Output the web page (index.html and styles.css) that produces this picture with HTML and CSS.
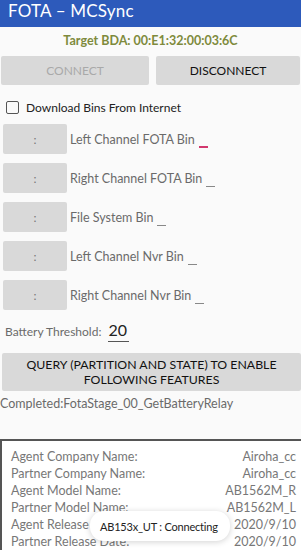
FILE: index.html
```html
<!DOCTYPE html>
<html>
<head>
<meta charset="utf-8">
<link rel="stylesheet" href="styles.css">
</head>
<body>
<div class="app">
  <header class="bar"><span class="title">FOTA – MCSync</span></header>
  <div class="bda">Target BDA: 00:E1:32:00:03:6C</div>
  <div class="conn">
    <div class="btn disabled">CONNECT</div>
    <div class="btn">DISCONNECT</div>
  </div>
  <label class="check"><span class="box"></span>Download Bins From Internet</label>
  <div class="bins">
    <div class="bin"><div class="pick">:</div><span class="name">Left Channel FOTA Bin</span><span class="line red"></span></div>
    <div class="bin"><div class="pick">:</div><span class="name">Right Channel FOTA Bin</span><span class="line"></span></div>
    <div class="bin"><div class="pick">:</div><span class="name">File System Bin</span><span class="line"></span></div>
    <div class="bin"><div class="pick">:</div><span class="name">Left Channel Nvr Bin</span><span class="line"></span></div>
    <div class="bin"><div class="pick">:</div><span class="name">Right Channel Nvr Bin</span><span class="line"></span></div>
  </div>
  <div class="battery"><span class="blabel">Battery Threshold:</span><span class="bval">20</span></div>
  <div class="query">QUERY (PARTITION AND STATE) TO ENABLE FOLLOWING FEATURES</div>
  <div class="status">Completed:FotaStage_00_GetBatteryRelay</div>
  <div class="info">
    <div class="row"><span>Agent Company Name:</span><span>Airoha_cc</span></div>
    <div class="row"><span>Partner Company Name:</span><span>Airoha_cc</span></div>
    <div class="row"><span>Agent Model Name:</span><span>AB1562M_R</span></div>
    <div class="row"><span>Partner Model Name:</span><span>AB1562M_L</span></div>
    <div class="row"><span>Agent Release Date:</span><span>2020/9/10</span></div>
    <div class="row"><span>Partner Release Date:</span><span>2020/9/10</span></div>
    <div class="toast">AB153x_UT : Connecting</div>
  </div>
</div>
</body>
</html>
```
FILE: styles.css
```css
html, body { margin: 0; padding: 0; }
body {
  width: 301px;
  height: 550px;
  overflow: hidden;
  background: #fafafa;
  font-family: Lato, "Noto Sans", sans-serif;
}
.app { display: flex; flex-direction: column; }
.bar {
  height: 27px;
  background: #2d5abb;
  display: flex;
  align-items: flex-end;
  padding-left: 8px;
}
.title {
  color: #fff;
  font-size: 17px;
  line-height: 20px;
  margin-bottom: 6px;
  letter-spacing: 0.2px;
}
.bda {
  text-align: center;
  color: #7e8a3c;
  font-weight: bold;
  font-size: 12.5px;
  margin-top: 6px;
  height: 16px;
  line-height: 16px;
}
.conn {
  display: flex;
  gap: 7px;
  padding: 0 1px;
  margin-top: 7px;
}
.btn {
  flex: 1;
  height: 29px;
  background: #d9d9d9;
  display: flex;
  align-items: center;
  justify-content: center;
  font-size: 12px;
  color: #111;
  border-radius: 2px;
}
.btn.disabled { color: #a9a9a9; }
.btn:last-child { flex: 0 0 144px; }
.check {
  display: flex;
  align-items: center;
  margin: 13px 0 0 6px;
  font-size: 12px;
  color: #222;
  height: 18px;
}
.box {
  width: 11px;
  height: 11px;
  border: 1.5px solid #555;
  border-radius: 2px;
  margin-right: 7px;
}
.bins {
  display: flex;
  flex-direction: column;
  gap: 9px;
  margin-top: 8px;
  padding-left: 3px;
}
.bin {
  display: flex;
  align-items: center;
  height: 30px;
}
.pick {
  width: 64px;
  height: 30px;
  background: #d9d9d9;
  border-radius: 2px;
  display: flex;
  align-items: center;
  justify-content: center;
  color: #777;
  font-size: 12px;
  margin-right: 3px;
}
.name { font-size: 12.5px; color: #6a6a6a; }
.line {
  width: 9px;
  height: 1px;
  background: #888;
  margin: 16px 0 0 4px;
}
.line.red { background: #d2386e; height: 1.5px; }
.battery {
  display: flex;
  align-items: center;
  margin: 10px 0 0 5px;
  height: 22px;
}
.blabel { font-size: 12px; color: #6a6a6a; margin-right: 7px; }
.bval {
  font-size: 16px;
  color: #222;
  border-bottom: 1px solid #555;
  padding: 0 2px 2px 0;
  line-height: 18px;
}
.query {
  margin: 11px 0 0 2px;
  height: 38px;
  background: #d9d9d9;
  display: flex;
  align-items: center;
  justify-content: center;
  text-align: center;
  font-size: 12.3px;
  line-height: 15px;
  color: #111;
  padding: 0 10px;
  border-radius: 2px;
}
.status {
  font-size: 12.5px;
  color: #6a6a6a;
  margin-top: 5px;
}
.info {
  position: relative;
  margin-top: 28px;
  margin-left: 0;
  border: 2px solid #555;
  border-right: none;
  border-bottom: none;
  background: #fff;
  padding: 7px 5px 0 9px;
  height: 120px;
}
.row {
  display: flex;
  justify-content: space-between;
  font-size: 12.5px;
  color: #777;
  height: 17px;
  line-height: 17px;
}
.toast {
  position: absolute;
  left: 88px;
  top: 70px;
  background: #fff;
  border-radius: 14px;
  box-shadow: 0 1px 6px rgba(0,0,0,0.18);
  padding: 0 12px 0 10px;
  height: 30px;
  line-height: 31px;
  font-size: 11px;
  letter-spacing: -0.2px;
  color: #222;
}
```
